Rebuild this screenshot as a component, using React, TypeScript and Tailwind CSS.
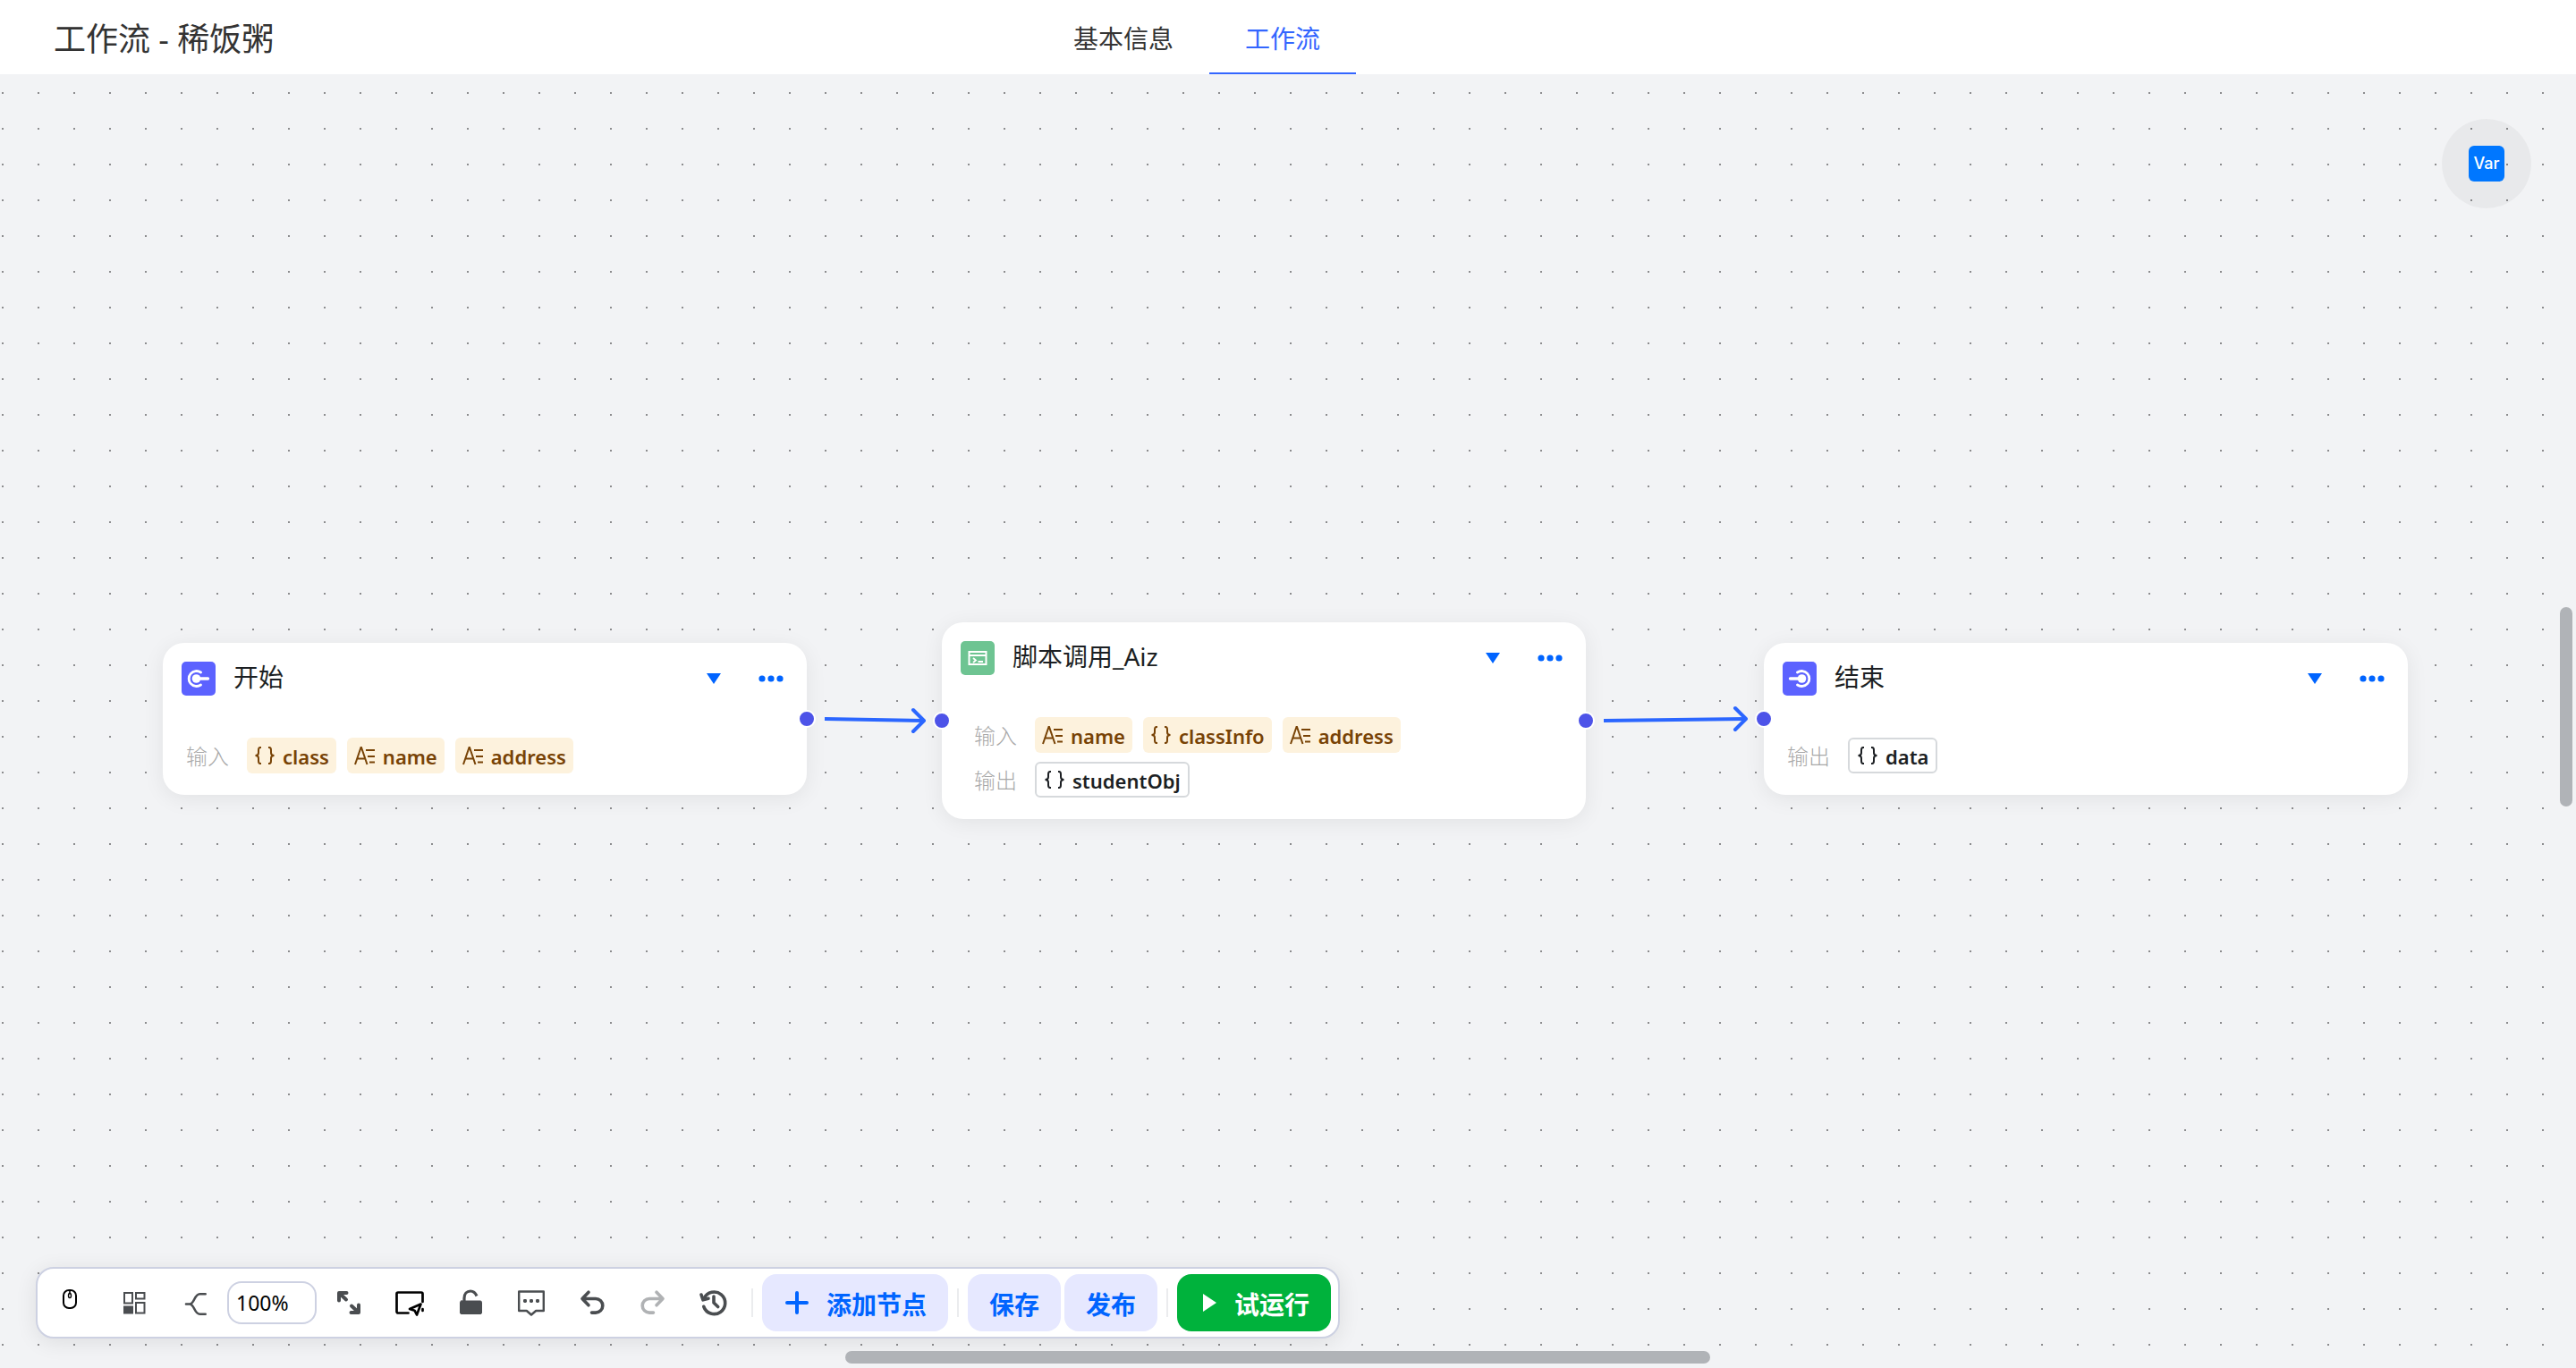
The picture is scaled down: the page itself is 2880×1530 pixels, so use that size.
import clsx from "clsx";
import { FC, ReactNode } from "react";

type VarType = "object" | "string";

interface IVariable {
  name: string;
  type: VarType;
}

interface IVarRow {
  label: string;
  variables: IVariable[];
  outlined?: boolean;
}

interface IFlowNode {
  title: string;
  icon: ReactNode;
  rows: IVarRow[];
  position: string;
  bodyPadding: string;
  hasInput?: boolean;
  hasOutput?: boolean;
}

const StartIcon: FC<{ flipped?: boolean }> = ({ flipped }) => (
  <svg
    viewBox="0 0 38 38"
    className={clsx("size-[38px] shrink-0", flipped && "-scale-x-100")}
    fill="none"
  >
    <rect width="38" height="38" rx="5" fill="#5c62ff" />
    <path
      d="M21.5 12A8.5 8.5 0 1 0 21.5 26"
      stroke="#fff"
      strokeWidth="2.8"
      strokeLinecap="round"
    />
    <circle cx="16.5" cy="19" r="4.8" fill="#fff" />
    <path d="M17 19h12.5" stroke="#fff" strokeWidth="3.4" strokeLinecap="round" />
  </svg>
);

const ScriptIcon = () => (
  <svg viewBox="0 0 38 38" className="size-[38px] shrink-0" fill="none">
    <rect width="38" height="38" rx="5" fill="#6ec492" />
    <g stroke="#fff" strokeWidth="2">
      <path d="M9.5 12h19v14h-19zM9.5 16h19" />
      <path d="M14 19l3 2.5-3 2.5M19.5 23H25" strokeWidth="1.8" />
    </g>
  </svg>
);

const VarTypeIcon: FC<{ type: VarType }> = ({ type }) => (
  <svg
    viewBox="0 0 24 24"
    className="size-6 shrink-0"
    fill="none"
    stroke="currentColor"
    strokeWidth="2"
  >
    {type === "object" ? (
      <path d="M8 3H7Q5 3 5 6v3q0 3-3.5 3Q5 12 5 15v3q0 3 2 3h1M16 3h1q2 0 2 3v3q0 3 3.5 3-3.5 0-3.5 3v3q0 3-2 3h-1" />
    ) : (
      <path d="M1 22L7.500 3h.5L14.500 22M3.500 15.500h8.500M13 6h10M15 13h8M17 19.500h6" />
    )}
  </svg>
);

const VarTag: FC<{ variable: IVariable; outlined?: boolean }> = ({
  variable,
  outlined,
}) => (
  <span
    className={clsx(
      "flex h-10 items-center gap-2 rounded-md px-2 text-[22px] font-semibold leading-8",
      outlined
        ? "border-2 border-[#d6d9dc] bg-white text-[#1c1f23]"
        : "bg-[#fdf2dd] text-[#784306]"
    )}
  >
    <VarTypeIcon type={variable.type} />
    <span className="pt-0.5">{variable.name}</span>
  </span>
);

const Port: FC<{ side: string }> = ({ side }) => (
  <span
    className={clsx(
      "absolute top-1/2 size-5 -translate-y-1/2 rounded-full border-2 border-white bg-[#4d53e8]",
      side
    )}
  />
);

const FlowNode: FC<IFlowNode> = ({
  title,
  icon,
  rows,
  position,
  bodyPadding,
  hasInput,
  hasOutput,
}) => {
  return (
    <section
      className={clsx(
        "absolute w-[720px] rounded-3xl bg-white pt-[21px] pb-6 shadow-[0_4px_24px_rgba(0,0,0,0.07)]",
        position
      )}
    >
      <header className="flex items-center pr-5 pl-[21px]">
        {icon}
        <h2 className="ml-5 flex-1 pb-1 text-[28px] leading-[34px] text-[#1c1f23]">
          {title}
        </h2>
        <button
          type="button"
          aria-label="收起"
          className="mr-6 flex h-8 w-10 items-center justify-center"
        >
          <svg viewBox="0 0 16 12" className="h-3 w-4" fill="#0064ff">
            <path d="M0 0h16L8 12z" />
          </svg>
        </button>
        <button
          type="button"
          aria-label="更多"
          className="flex h-8 w-10 items-center justify-center"
        >
          <svg viewBox="0 0 28 8" className="h-2 w-7" fill="#0064ff">
            <circle cx="4" cy="4" r="3.6" />
            <circle cx="14" cy="4" r="3.6" />
            <circle cx="24" cy="4" r="3.6" />
          </svg>
        </button>
      </header>
      <div className={clsx("mt-[47px] flex flex-col gap-2.5", bodyPadding)}>
        {rows.map((row) => (
          <div key={row.label} className="flex items-center gap-3">
            <span className="mr-2 w-12 pt-0.5 text-2xl font-light text-[#a8a8a8]">
              {row.label}
            </span>
            {row.variables.map((item) => (
              <VarTag key={item.name} variable={item} outlined={row.outlined} />
            ))}
          </div>
        ))}
      </div>
      {hasInput && <Port side="-left-2.5" />}
      {hasOutput && <Port side="-right-2.5" />}
    </section>
  );
};

const nodes: IFlowNode[] = [
  {
    title: "开始",
    icon: <StartIcon />,
    position: "top-[636px] left-[182px]",
    bodyPadding: "pl-[26px]",
    hasOutput: true,
    rows: [
      {
        label: "输入",
        variables: [
          { name: "class", type: "object" },
          { name: "name", type: "string" },
          { name: "address", type: "string" },
        ],
      },
    ],
  },
  {
    title: "脚本调用_Aiz",
    icon: <ScriptIcon />,
    position: "top-[613px] left-[1053px]",
    bodyPadding: "pl-[36px]",
    hasInput: true,
    hasOutput: true,
    rows: [
      {
        label: "输入",
        variables: [
          { name: "name", type: "string" },
          { name: "classInfo", type: "object" },
          { name: "address", type: "string" },
        ],
      },
      {
        label: "输出",
        outlined: true,
        variables: [{ name: "studentObj", type: "object" }],
      },
    ],
  },
  {
    title: "结束",
    icon: <StartIcon flipped />,
    position: "top-[636px] left-[1972px]",
    bodyPadding: "pl-[26px]",
    hasInput: true,
    rows: [
      {
        label: "输出",
        outlined: true,
        variables: [{ name: "data", type: "object" }],
      },
    ],
  },
];

const ToolButton: FC<{
  label: string;
  color?: string;
  disabled?: boolean;
  children: ReactNode;
}> = ({ label, color = "text-[#4a4d50]", disabled, children }) => (
  <button
    type="button"
    aria-label={label}
    disabled={disabled}
    className={clsx("flex h-16 w-[68px] items-center justify-center", color)}
  >
    <svg
      viewBox="0 0 36 36"
      className="size-9"
      fill="none"
      stroke="currentColor"
      strokeLinecap="round"
      strokeLinejoin="round"
    >
      {children}
    </svg>
  </button>
);

const Divider = () => <span className="mx-2.5 h-8 w-0.5 bg-[#ebecee]" />;

const Toolbar = () => (
  <div className="absolute bottom-[33px] left-10 flex items-center rounded-[20px] border-2 border-[#cdd1e2] bg-white py-1.5 pr-2 pl-0.5 shadow-[0_4px_24px_rgba(0,0,0,0.09)]">
    <ToolButton label="鼠标模式" color="mr-1 text-black">
      <rect x="11" y="4" width="14" height="20" rx="6" strokeWidth="2" />
      <path d="M18 4v4" strokeWidth="1.6" />
      <ellipse cx="18" cy="10" rx="1.5" ry="2.6" strokeWidth="1.4" />
    </ToolButton>
    <ToolButton label="缩略图">
      <g strokeWidth="2" strokeLinejoin="miter">
        <path d="M7 7h9v11.5H7zM20 7h9.5v6.5H20zM20 18h9.5v11.5H20z" />
        <path d="M7 22.5h9v7H7z" fill="currentColor" />
      </g>
    </ToolButton>
    <ToolButton label="连线类型">
      <path
        d="M8 19.5h4c5.5 0 5-11.3 11.5-11.3h6.2M12 19.5c5.5 0 5 11.3 11.5 11.3h6.2"
        strokeWidth="2.6"
      />
    </ToolButton>
    <input
      type="text"
      aria-label="缩放"
      defaultValue="100%"
      className="mx-0.5 h-12 w-[100px] rounded-2xl border-2 border-[#cdd1e2] bg-white px-2 text-[23px] text-black"
    />
    <ToolButton label="适应画布">
      <path
        d="M15.500 7H7v8.500M7.500 7.500l7.500 7M20.500 29H29v-8.500M28.500 28.500l-7.500-7"
        strokeWidth="4"
      />
    </ToolButton>
    <ToolButton label="小地图" color="text-black">
      <path d="M16.500 29.500H5a1.500 1.500 0 0 1-1.500-1.500V8A1.500 1.500 0 0 1 5 6.500h26A1.500 1.500 0 0 1 32.500 8v9M32.500 25v2" strokeWidth="2.7" />
      <path d="M30.500 19.500L18 25l5.500 1.700L26 31.500z" strokeWidth="2.7" />
    </ToolButton>
    <ToolButton label="锁定">
      <rect x="6.5" y="16" width="24" height="14.5" rx="1.5" fill="currentColor" strokeWidth="1" />
      <path d="M11 16v-3c0-5 3-8 7-8 3.5 0 5.5 2 7 5.5" strokeWidth="3.2" strokeLinecap="butt" />
    </ToolButton>
    <ToolButton label="评论">
      <path d="M4.200 5.500h27.600V27h-8.600L18 31.500 12.800 27H4.200z" strokeWidth="2.4" />
      <g fill="currentColor" stroke="none">
        <rect x="9" y="14" width="4" height="4" rx="1.4" />
        <rect x="16" y="14" width="4" height="4" rx="1.4" />
        <rect x="23" y="14" width="4" height="4" rx="1.4" />
      </g>
    </ToolButton>
    <ToolButton label="撤销">
      <path d="M14 6.200l-7 7.300 7 7.300M7.500 13.500H22a7.800 7.800 0 0 1 0 15.600h-4.500" strokeWidth="3.6" />
    </ToolButton>
    <ToolButton label="重做" color="text-[#b0b2b4]" disabled>
      <path d="M22 6.200l7 7.300-7 7.300M28.500 13.500H14a7.800 7.800 0 0 0 0 15.600h4.500" strokeWidth="3.6" />
    </ToolButton>
    <ToolButton label="历史" color="mr-[-2px] text-[#4a4d50]">
      <path d="M6.800 22.300A12.300 12.300 0 1 0 7.200 13.300" strokeWidth="3.6" />
      <path d="M4 9l2 5.800 6-1.500" strokeWidth="3.6" />
      <path d="M18 11v7l4.700 4.500" strokeWidth="3.6" />
    </ToolButton>
    <Divider />
    <button
      type="button"
      className="flex h-16 items-center gap-[18px] rounded-2xl bg-[#e6e8ff] px-6 text-[28px] font-bold text-[#0064ff]"
    >
      <svg viewBox="0 0 30 30" className="size-[30px]" stroke="currentColor" strokeWidth="4" strokeLinecap="round">
        <path d="M4 15h22M15 4v22" />
      </svg>
      <span className="pt-1">添加节点</span>
    </button>
    <Divider />
    <button
      type="button"
      className="mr-1 h-16 rounded-2xl bg-[#e6e8ff] px-6 pt-1 text-[28px] font-bold text-[#0064ff]"
    >
      保存
    </button>
    <button
      type="button"
      className="h-16 rounded-2xl bg-[#e6e8ff] px-6 pt-1 text-[28px] font-bold text-[#0064ff]"
    >
      发布
    </button>
    <Divider />
    <button
      type="button"
      className="flex h-16 items-center gap-5 rounded-2xl bg-[#00b23c] pr-6 pl-7 text-[28px] font-bold text-white"
    >
      <svg viewBox="0 0 16 20" className="h-5 w-4" fill="currentColor">
        <path d="M1 0l15 10L1 20z" />
      </svg>
      <span className="pt-1">试运行</span>
    </button>
  </div>
);

export default function App() {
  return (
    <div className="flex h-screen flex-col overflow-hidden bg-white font-['Noto_Sans','Noto_Sans_CJK_SC',sans-serif]">
      <header className="flex h-[83px] shrink-0 pr-[264px] pl-[60px]">
        <h1 className="flex-1 pt-1 text-4xl leading-[79px] text-[#333]">
          工作流 - 稀饭粥
        </h1>
        <nav className="flex text-[28px] text-[#333]">
          <a href="#info" className="border-b-2 border-transparent px-10 pt-1 leading-[79px]">
            基本信息
          </a>
          <a href="#flow" className="border-b-2 border-[#3366ff] px-10 pt-1 leading-[79px] text-[#3366ff]">
            工作流
          </a>
        </nav>
        <div className="flex-1" />
      </header>

      <main className="relative flex-1 overflow-hidden bg-[#f2f3f5]">
        <svg className="absolute inset-0 size-full" aria-hidden="true">
          <defs>
            <pattern id="dots" width="40" height="40" patternUnits="userSpaceOnUse">
              <rect x="2" y="20" width="2" height="2" fill="#8c8c8e" />
            </pattern>
          </defs>
          <rect width="100%" height="100%" fill="url(#dots)" />
        </svg>

        {nodes.map((node) => (
          <FlowNode key={node.title} {...node} />
        ))}

        <svg
          className="pointer-events-none absolute inset-0 size-full"
          fill="none"
          stroke="#2b66ff"
          strokeWidth="4"
          strokeLinejoin="round"
          aria-hidden="true"
        >
          <path d="M922 721L1033 723M1793 723L1952 721" />
          <path d="M1021 711l12 12-12 12M1940 709l12 12-12 12" strokeLinecap="round" />
        </svg>

        <button
          type="button"
          className="absolute top-[50px] right-[50px] flex size-[100px] items-center justify-center rounded-full bg-black/4"
        >
          <span className="flex size-10 items-center justify-center rounded-md bg-[#0077ff] font-[Inter,sans-serif] text-lg font-medium text-white">
            Var
          </span>
        </button>

        <Toolbar />

        <div className="absolute bottom-[5px] left-[945px] h-3.5 w-[967px] rounded-full bg-[#b0b3b7]" />
        <div className="absolute top-[596px] right-1 h-[223px] w-3.5 rounded-full bg-[#b0b3b7]" />
      </main>
    </div>
  );
}
